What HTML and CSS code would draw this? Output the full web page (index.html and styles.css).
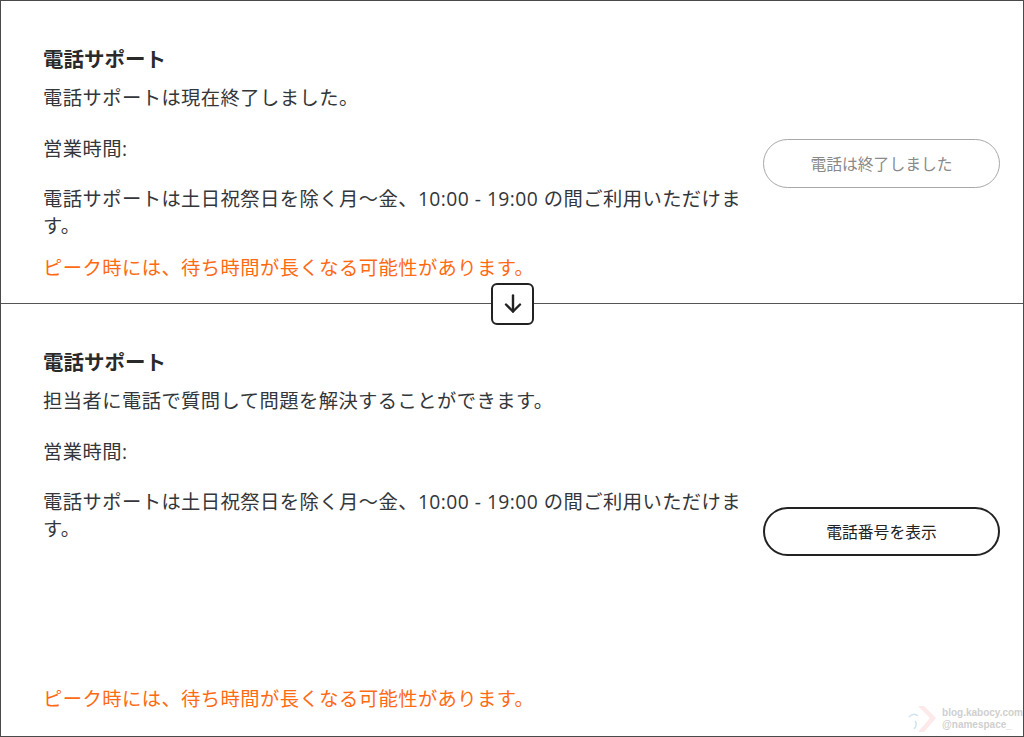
FILE: index.html
```html
<!DOCTYPE html>
<html lang="ja">
<head>
<meta charset="utf-8">
<title>電話サポート</title>
<link rel="stylesheet" href="styles.css">
</head>
<body>
<div class="frame">
  <section class="panel panel-closed">
    <div class="info">
      <h2 class="title">電話サポート</h2>
      <p class="lead">電話サポートは現在終了しました。</p>
      <p class="hours-label">営業時間:</p>
      <p class="hours">電話サポートは土日祝祭日を除く月～金、10:00 - 19:00 の間ご利用いただけます。</p>
      <p class="note">ピーク時には、待ち時間が長くなる可能性があります。</p>
    </div>
    <div class="action">
      <button class="btn btn-disabled" type="button">電話は終了しました</button>
    </div>
    <div class="arrow-badge">
      <svg width="24" height="24" viewBox="0 0 24 24" fill="none" stroke="#222" stroke-width="2.4" stroke-linecap="round" stroke-linejoin="round"><path d="M12 3.5v16"/><path d="M5 12.5l7 7 7-7"/></svg>
    </div>
  </section>
  <section class="panel panel-open">
    <div class="info">
      <h2 class="title">電話サポート</h2>
      <p class="lead">担当者に電話で質問して問題を解決することができます。</p>
      <p class="hours-label">営業時間:</p>
      <p class="hours">電話サポートは土日祝祭日を除く月～金、10:00 - 19:00 の間ご利用いただけます。</p>
      <p class="note note-bottom">ピーク時には、待ち時間が長くなる可能性があります。</p>
    </div>
    <div class="action">
      <button class="btn btn-primary" type="button">電話番号を表示</button>
    </div>
    <div class="watermark">
      <svg class="wm-logo" width="34" height="30" viewBox="0 0 34 30"><path d="M14 2 L26 14 L14 28 L20 28 L32 14 L20 2 Z" fill="#fde8ea"/><path d="M5 13 Q10 8 14 12" stroke="#cfe3f0" stroke-width="1.5" fill="none"/><path d="M11 17 Q14 20 10 25" stroke="#cfe3f0" stroke-width="1.5" fill="none"/></svg>
      <div class="wm-text"><span>blog.kabocy.com</span><span>@namespace_</span></div>
    </div>
  </section>
</div>
</body>
</html>
```
FILE: styles.css
```css
* { box-sizing: border-box; }
html, body { margin: 0; padding: 0; background: #fff; }
body {
  font-family: "Open Sans", "Noto Sans CJK JP", sans-serif;
  color: #33363a;
}
.frame {
  width: 1024px;
  height: 737px;
  border: 1px solid #4a4a4a;
  display: flex;
  flex-direction: column;
}
.panel {
  position: relative;
  display: flex;
  padding: 43px 23px 0 42px;
}
.panel-closed {
  height: 303px;
  border-bottom: 1px solid #555;
  padding-bottom: 21px;
}
.panel-open {
  flex: 1;
  padding-bottom: 24px;
}
.info {
  width: 710px;
  display: flex;
  flex-direction: column;
}
.title {
  margin: 0;
  font-family: "Noto Sans CJK JP", sans-serif;
  font-size: 20.5px;
  line-height: 28px;
  font-weight: 700;
  color: #2a2a2a;
}
.info p {
  margin: 0;
  font-size: 19.3px;
  line-height: 27px;
  letter-spacing: 0.45px;
}
.lead { margin-top: 12px !important; }
.hours-label { margin-top: 24px !important; }
.hours { margin-top: 23px !important; }
.note {
  margin-top: 15px !important;
  color: #ff6a13;
}
.note-bottom { margin-top: auto !important; }
.action {
  flex: 1;
  display: flex;
  justify-content: flex-end;
  align-items: center;
}
.panel-closed .action { padding-top: 1px; }
.panel-open .action { padding-top: 3px; }
.btn {
  width: 237px;
  height: 49px;
  border-radius: 25px;
  background: #fff;
  font-family: "Noto Sans CJK JP", sans-serif;
  font-size: 15.8px;
  cursor: pointer;
}
.btn-disabled {
  border: 1px solid #a8a8a8;
  color: #8a8a8a;
}
.btn-primary {
  border: 2px solid #222;
  color: #222;
}
.arrow-badge {
  position: absolute;
  left: 490px;
  bottom: -22px;
  width: 43px;
  height: 42px;
  border: 2px solid #222;
  border-radius: 6px;
  background: #fff;
  display: flex;
  align-items: center;
  justify-content: center;
  z-index: 2;
}
.watermark {
  position: absolute;
  right: 0;
  bottom: 2px;
  display: flex;
  align-items: center;
  gap: 4px;
}
.wm-text {
  display: flex;
  flex-direction: column;
  font-family: "Liberation Sans", Arial, sans-serif;
  font-size: 10px;
  line-height: 12px;
  font-weight: 700;
  color: #cfcfcf;
}
```
